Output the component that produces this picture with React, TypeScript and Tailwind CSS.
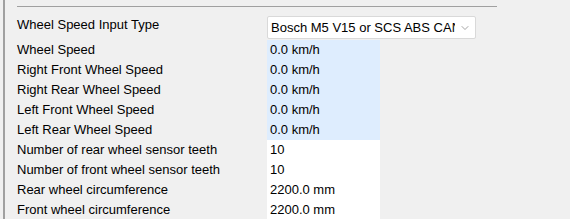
import { ChevronDown } from 'lucide-react'

const speedRows = [
  'Wheel Speed',
  'Right Front Wheel Speed',
  'Right Rear Wheel Speed',
  'Left Front Wheel Speed',
  'Left Rear Wheel Speed',
]

const configRows: [string, string][] = [
  ['Number of rear wheel sensor teeth', '10'],
  ['Number of front wheel sensor teeth', '10'],
  ['Rear wheel circumference', '2200.0 mm'],
  ['Front wheel circumference', '2200.0 mm'],
]

export default function App() {
  return (
    <div
      className="flex w-[570px] h-[219px] overflow-hidden bg-[#f0f0f0] text-[13px] text-black"
      style={{ fontFamily: '"Liberation Sans", Arial, sans-serif' }}
    >
      <div className="w-[3px] shrink-0 bg-[#f0f0f0]" />
      <div className="w-[2px] shrink-0 bg-[#a0a0a0]" />
      <div className="flex-1 pl-[12px]">
        <div className="mt-[6px] w-[480px] h-px bg-[#a0a0a0]" />

        <div className="mt-[9px] flex h-[24px]">
          <div className="w-[250px] pt-[1px] leading-[16px]">Wheel Speed Input Type</div>
          <div className="flex items-center w-[209px] h-[23px] bg-white border border-[#d9d9d9] rounded-[2px] pl-[3px] pr-[4px]">
            <span className="flex-1 whitespace-nowrap overflow-hidden">Bosch M5 V15 or SCS ABS CAN</span>
            <ChevronDown size={12} strokeWidth={1.2} className="ml-[4px] shrink-0 text-[#666]" />
          </div>
        </div>

        {speedRows.map(r => (
          <div key={r} className="flex h-[20px] items-center">
            <div className="w-[250px]">{r}</div>
            <div className="w-[113px] h-full flex items-center pl-[3px] bg-[#deedfe]">0.0 km/h</div>
          </div>
        ))}

        {configRows.map(([label, value]) => (
          <div key={label} className="flex h-[20px] items-center">
            <div className="w-[250px]">{label}</div>
            <div className="w-[113px] h-full flex items-center pl-[3px] bg-white">{value}</div>
          </div>
        ))}
      </div>
    </div>
  )
}
